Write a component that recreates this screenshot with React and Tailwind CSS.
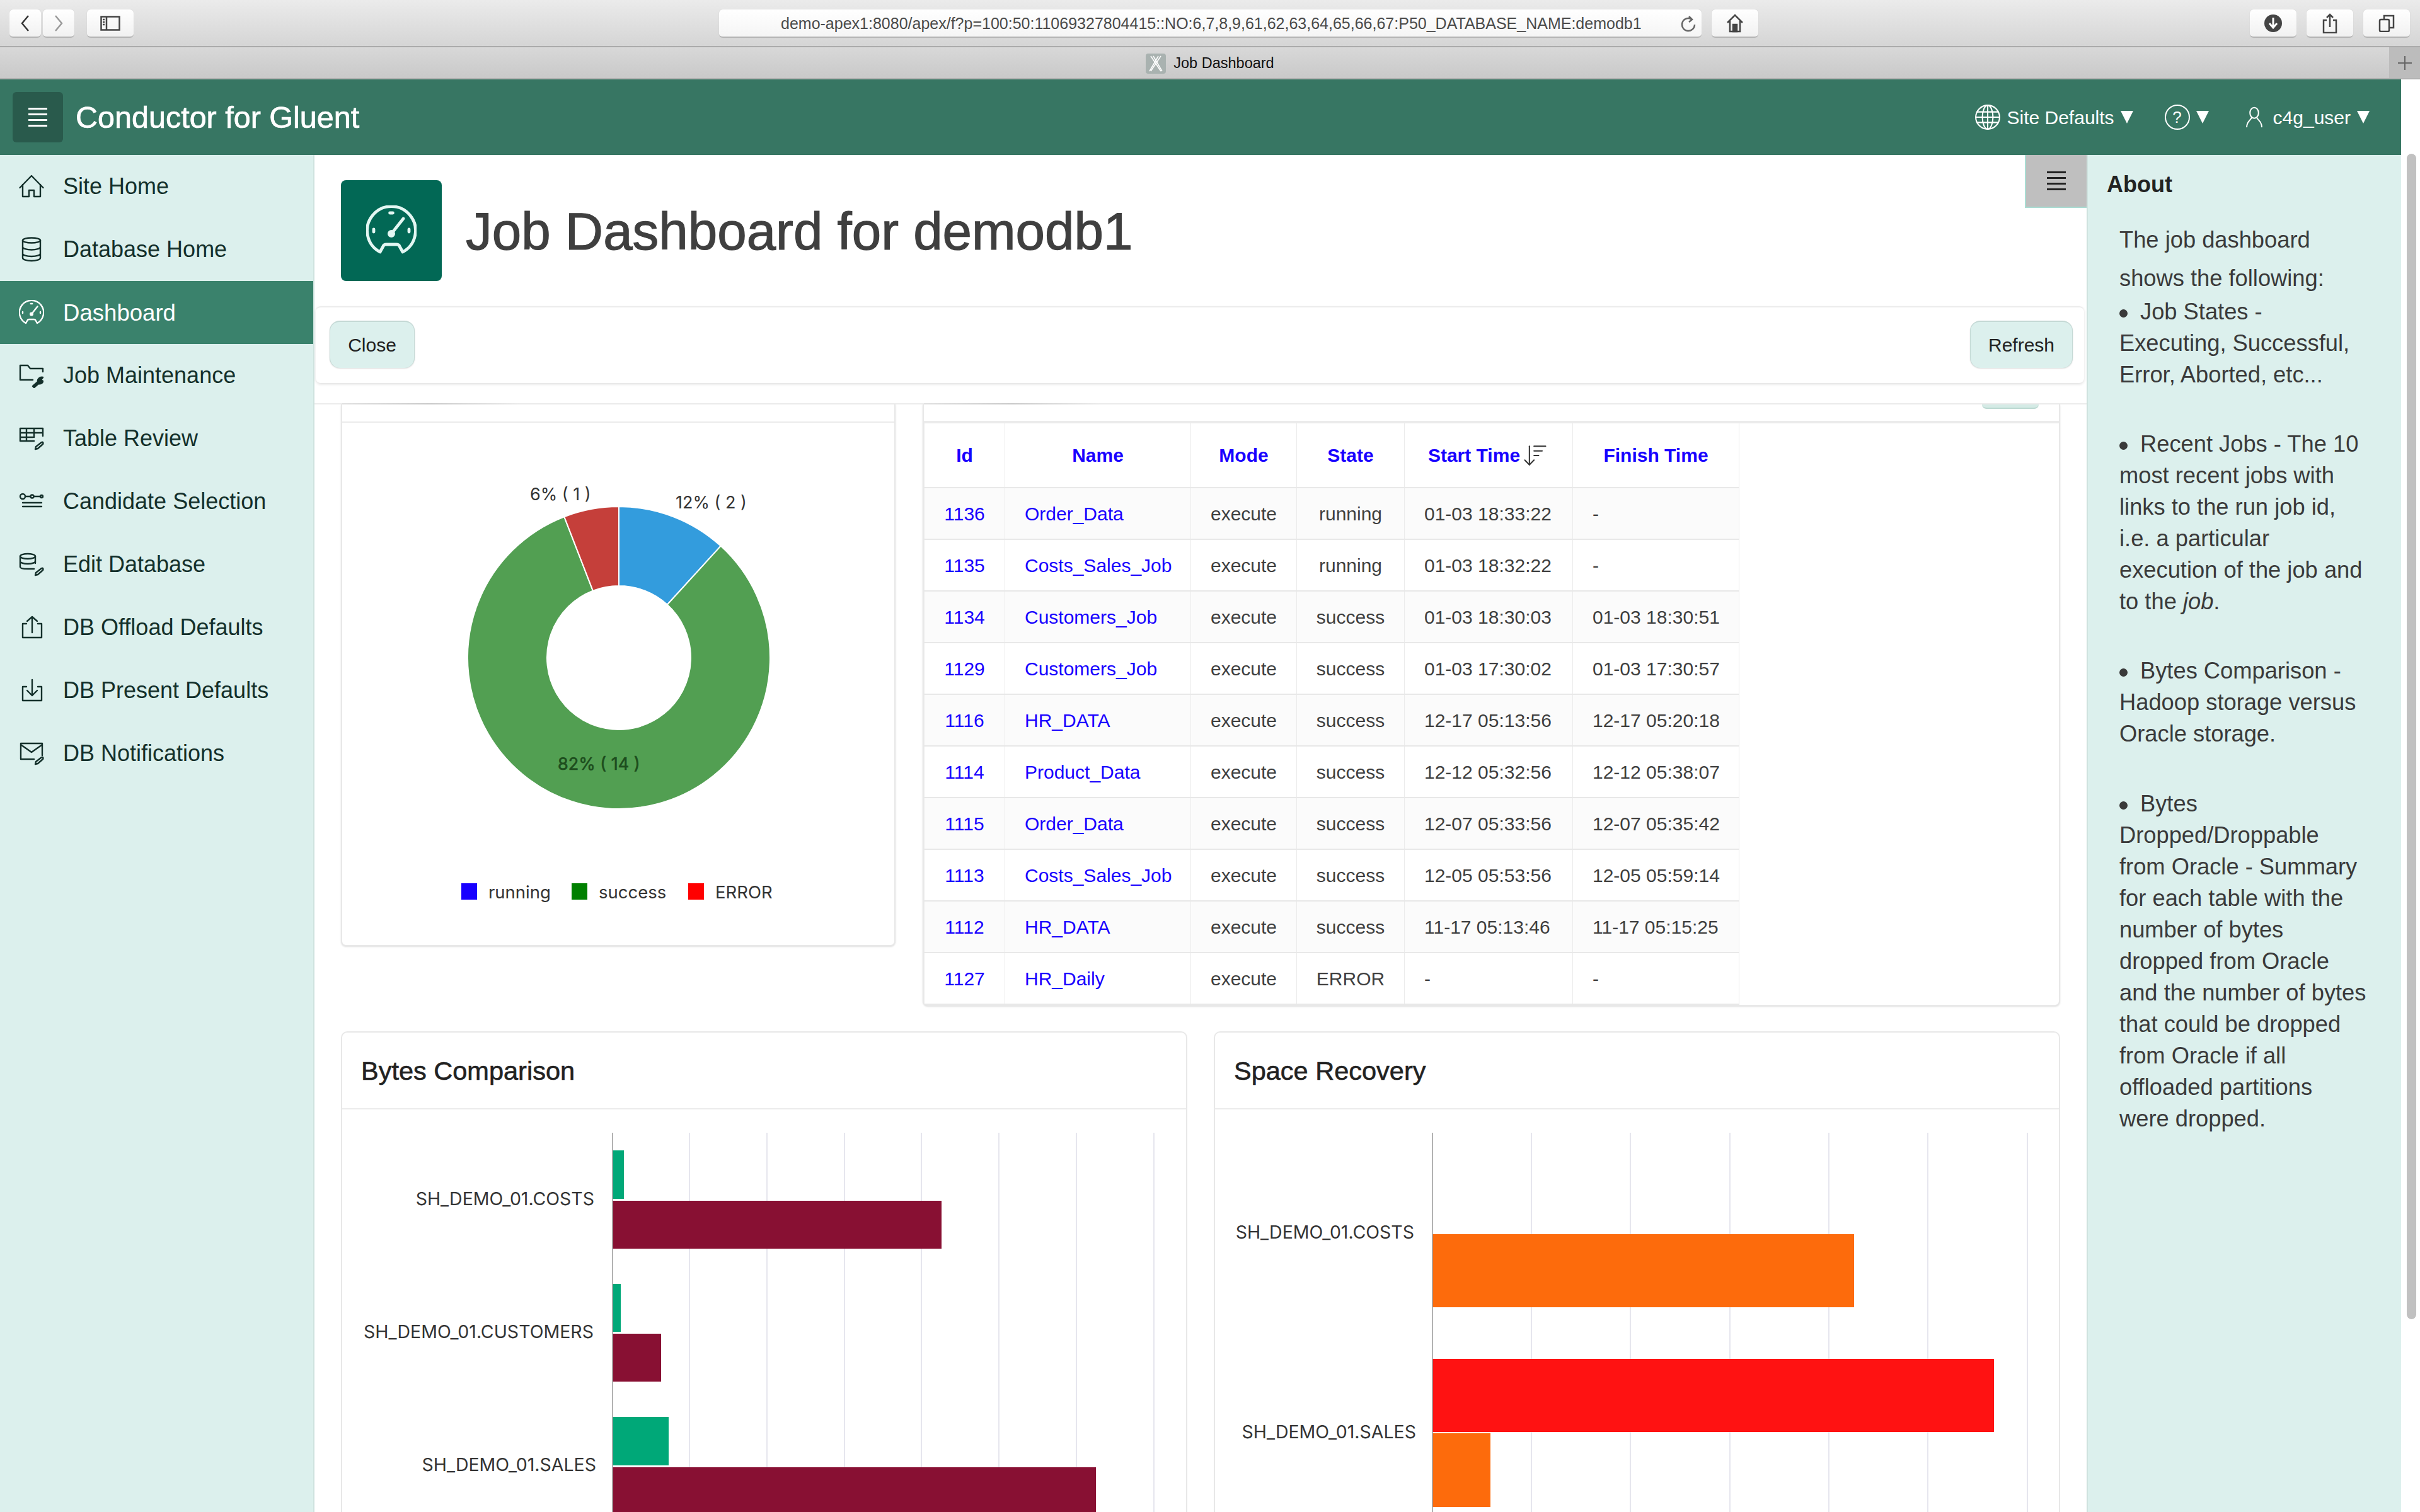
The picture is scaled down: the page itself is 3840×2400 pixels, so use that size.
import { ArrowDownWideNarrow } from "lucide-react";

const helvetica = "font-['Liberation_Sans',Arial,sans-serif]";

const jobs = [
  ["1136", "Order_Data", "running", "01-03 18:33:22", "-"],
  ["1135", "Costs_Sales_Job", "running", "01-03 18:32:22", "-"],
  ["1134", "Customers_Job", "success", "01-03 18:30:03", "01-03 18:30:51"],
  ["1129", "Customers_Job", "success", "01-03 17:30:02", "01-03 17:30:57"],
  ["1116", "HR_DATA", "success", "12-17 05:13:56", "12-17 05:20:18"],
  ["1114", "Product_Data", "success", "12-12 05:32:56", "12-12 05:38:07"],
  ["1115", "Order_Data", "success", "12-07 05:33:56", "12-07 05:35:42"],
  ["1113", "Costs_Sales_Job", "success", "12-05 05:53:56", "12-05 05:59:14"],
  ["1112", "HR_DATA", "success", "11-17 05:13:46", "11-17 05:15:25"],
  ["1127", "HR_Daily", "ERROR", "-", "-"],
];

const Svg = ({ children, size = 40, className = "", sw = 2.4 }) => (
  <svg
    width={size}
    height={size}
    viewBox="0 0 40 40"
    fill="none"
    stroke="currentColor"
    strokeWidth={sw}
    strokeLinecap="round"
    strokeLinejoin="round"
    className={className}
  >
    {children}
  </svg>
);

const Pencil = () => <path d="M26 37l1-4 9-7c2-1 3 1 2 3l-8 7z" />;

const HomeIcon = (p) => (
  <Svg {...p}>
    <path d="M1.5 22L20 3l18.5 19M6 17v19h10V26h8v10h10V17" />
  </Svg>
);
const DatabaseIcon = (p) => (
  <Svg {...p}>
    <ellipse cx="20" cy="5.5" rx="14" ry="4" />
    <path d="M6 5.5v28c0 2.5 6 4.5 14 4.5s14-2 14-4.5v-28M6 16c0 2.5 6 4.5 14 4.5s14-2 14-4.5M6 26.5c0 2.5 6 4.5 14 4.5s14-2 14-4.5" />
  </Svg>
);
const GaugeIcon = (p) => (
  <Svg {...p}>
    <path d="M11 37A19.2 19.2 0 1 1 29 37l-2.5-4.5Q26 31 24 31H16Q14 31 13.5 32.5Z" />
    <path d="M20 22.5l9.5-12" />
    <circle cx="20" cy="22.5" r="1.8" fill="currentColor" />
    <path d="M18.8 6h2.4M6 19v2M34 19v2" />
  </Svg>
);
const FolderWrenchIcon = (p) => (
  <Svg {...p}>
    <path d="M22 27H2V4h12l4 5h20v5" />
    <path d="M22 37l8-7c-1-4 3-8 8-7l-3 4 3 2c0 3-4 5-7 4l-7 6z" fill="currentColor" />
  </Svg>
);
const TableEditIcon = (p) => (
  <Svg {...p}>
    <path d="M24 24H2V4h36v12M2 11h36M2 18h20M12 4v20M24 4v14" />
    <Pencil />
  </Svg>
);
const SlidersIcon = (p) => (
  <Svg {...p}>
    <circle cx="6" cy="12" r="4" />
    <circle cx="21" cy="12" r="2.5" />
    <circle cx="36" cy="12" r="2" />
    <path d="M10 12h8M24 12h10M6 22h30M6 28h30" />
  </Svg>
);
const DatabaseEditIcon = (p) => (
  <Svg {...p}>
    <ellipse cx="14" cy="7" rx="12" ry="4" />
    <path d="M2 7v17c0 2 5 3 12 3h10M26 7v11M2 15c0 2 5 4 12 4s12-2 12-4" />
    <Pencil />
  </Svg>
);
const UploadIcon = (p) => (
  <Svg {...p}>
    <path d="M12 14H6v22h30V14h-6M21 28V3M13 10l8-7 8 7" />
  </Svg>
);
const DownloadIcon = (p) => (
  <Svg {...p}>
    <path d="M12 14H6v22h30V14h-6M21 28V3M13 20l8 8 8-8" />
  </Svg>
);
const MailEditIcon = (p) => (
  <Svg {...p}>
    <path d="M24 29H3V4h34v19M3 6l17 12 17-12" />
    <Pencil />
  </Svg>
);
const GlobeIcon = (p) => (
  <Svg {...p}>
    <circle cx="20" cy="20" r="18" />
    <ellipse cx="20" cy="20" rx="8" ry="18" />
    <path d="M20 2v36M4 12h32M4 28h32M2 20h36" />
  </Svg>
);
const UserIcon = (p) => (
  <Svg {...p}>
    <ellipse cx="20" cy="12" rx="8" ry="10" />
    <path d="M15 21c-1 4-9 7-9 17M25 21c1 4 9 7 9 17" />
  </Svg>
);
const MenuIcon = ({ className = "" }) => (
  <span className={`flex w-[30px] flex-col gap-[6px] ${className}`}>
    <span className="h-[3px] bg-current" />
    <span className="h-[3px] bg-current" />
    <span className="h-[3px] bg-current" />
    <span className="h-[3px] bg-current" />
  </span>
);

const navItems = [
  { label: "Site Home", icon: HomeIcon },
  { label: "Database Home", icon: DatabaseIcon },
  { label: "Dashboard", icon: GaugeIcon, active: true },
  { label: "Job Maintenance", icon: FolderWrenchIcon },
  { label: "Table Review", icon: TableEditIcon },
  { label: "Candidate Selection", icon: SlidersIcon },
  { label: "Edit Database", icon: DatabaseEditIcon },
  { label: "DB Offload Defaults", icon: UploadIcon },
  { label: "DB Present Defaults", icon: DownloadIcon },
  { label: "DB Notifications", icon: MailEditIcon },
];

const ChromeButton = ({ className = "", children }) => (
  <div className={`flex h-[45px] items-center justify-center rounded-[6px] border-b-2 border-[#b4b4b4] bg-gradient-to-b from-white to-[#f1f1f1] text-[#444] shadow-[0_0_1px_#b5b5b5] ${className}`}>
    {children}
  </div>
);

const BrowserChrome = () => (
  <div className={helvetica}>
    <div className="flex h-[75px] items-start border-b-2 border-[#ababab] bg-gradient-to-b from-[#ebebeb] to-[#d5d5d5] pt-[15px]">
      <div className="ml-[15px] flex gap-[3px]">
        <ChromeButton className="w-[50px]">
          <svg width="20" height="30" viewBox="0 0 20 30" fill="none" stroke="#333" strokeWidth="2.5"><path d="M15 3L5 15l10 12" /></svg>
        </ChromeButton>
        <ChromeButton className="w-[50px]">
          <svg width="20" height="30" viewBox="0 0 20 30" fill="none" stroke="#999" strokeWidth="2.5"><path d="M5 3l10 12L5 27" /></svg>
        </ChromeButton>
      </div>
      <ChromeButton className="ml-[20px] w-[74px]">
        <svg width="32" height="24" viewBox="0 0 32 24" fill="none" stroke="#444" strokeWidth="2.5"><rect x="1.5" y="1.5" width="29" height="21" /><path d="M10 1.5v21M4 6h3M4 10h3M4 14h3" /></svg>
      </ChromeButton>
      <div className="ml-[929px] flex h-[45px] w-[1559px] items-center rounded-[6px] border-b-2 border-[#b4b4b4] bg-gradient-to-b from-white to-[#f5f5f5] pt-[2px] pl-[98px] text-[25px] whitespace-nowrap text-[#4a4a4a] shadow-[0_0_1px_#b5b5b5]">
        demo-apex1:8080/apex/f?p=100:50:11069327804415::NO:6,7,8,9,61,62,63,64,65,66,67:P50_DATABASE_NAME:demodb1
        <svg className="ml-[60px] shrink-0" width="26" height="28" viewBox="0 0 26 28" fill="none" stroke="#666" strokeWidth="2.5"><path d="M20 7a10 10 0 1 0 4 8M15 2l5 5-5 4" /></svg>
      </div>
      <ChromeButton className="ml-[16px] w-[74px]">
        <svg width="30" height="30" viewBox="0 0 30 30" fill="none" stroke="#444" strokeWidth="2.5"><path d="M3 14L15 2l12 12M7 11v17h16V11" /><rect x="12" y="17" width="6" height="11" fill="#444" /></svg>
      </ChromeButton>
      <ChromeButton className="ml-[780px] w-[74px]">
        <svg width="30" height="30" viewBox="0 0 30 30"><circle cx="15" cy="15" r="14" fill="#444" /><path d="M15 6v14M9 15l6 7 6-7" fill="none" stroke="#fff" strokeWidth="3" /></svg>
      </ChromeButton>
      <ChromeButton className="ml-[16px] w-[74px]">
        <svg width="24" height="32" viewBox="0 0 24 32" fill="none" stroke="#444" strokeWidth="2.5"><path d="M7 11H2v20h20V11h-5M12 22V2M7 7l5-5 5 5" /></svg>
      </ChromeButton>
      <ChromeButton className="ml-[16px] w-[74px]">
        <svg width="26" height="28" viewBox="0 0 26 28" fill="none" stroke="#444" strokeWidth="2.5"><rect x="2" y="8" width="15" height="19" rx="2" /><path d="M9 8V2h15v19h-7" /></svg>
      </ChromeButton>
    </div>
    <div className="flex h-[51px] border-b-2 border-[#b2b2b2] bg-gradient-to-b from-[#d8d8d8] to-[#c9c9c9]">
      <div className="flex flex-1 items-center justify-center gap-[12px] pt-[2px] text-[23.5px] text-[#111]">
        <span className="flex h-[32px] w-[32px] items-center justify-center rounded-[4px] bg-[#a9b2b0]">
          <svg width="22" height="28" viewBox="0 0 22 28" fill="none" stroke="#fff" strokeWidth="1.5"><path d="M3 2l16 24M19 2L3 26M7 2l14 24M15 2L1 26" /></svg>
        </span>
        <span className="mr-[-49px]">Job Dashboard</span>
      </div>
      <div className="flex w-[49px] items-center justify-center bg-[#bcbcbc]">
        <svg width="26" height="26" viewBox="0 0 26 26" stroke="#666" strokeWidth="2"><path d="M13 2v22M2 13h22" /></svg>
      </div>
    </div>
  </div>
);

const Caret = () => <span className="ml-[10px] border-x-[10px] border-t-[20px] border-x-transparent border-t-white" />;

const Header = () => (
  <header className="flex h-[120px] items-center bg-[#377663] pr-[50px] pl-[20px] text-white">
    <div className="flex h-[80px] w-[80px] items-center justify-center rounded-[6px] bg-[#295a4c]">
      <MenuIcon />
    </div>
    <div className="ml-[20px] text-[48.5px] [-webkit-text-stroke:0.7px_white]">Conductor for Gluent</div>
    <div className="ml-auto flex items-center text-[30px]">
      <GlobeIcon size={42} sw={2} />
      <span className="ml-[9px]">Site Defaults</span>
      <Caret />
      <span className="ml-[50px] flex h-[40px] w-[40px] items-center justify-center rounded-full border-2 border-white text-[26px]">?</span>
      <Caret />
      <span className="ml-[55px]"><UserIcon size={34} /></span>
      <span className="ml-[13px]">c4g_user</span>
      <Caret />
    </div>
  </header>
);

const Sidebar = () => (
  <nav className="w-[499px] shrink-0 border-r-2 border-[#cfe3df] bg-[#dcf0ed] text-[36px] text-[#14302b]">
    {navItems.map((item) => {
      const Icon = item.icon;
      return (
        <div
          key={item.label}
          className={`flex h-[100px] items-center pl-[30px] ${item.active ? "bg-[#3a826c] text-white" : ""}`}
        >
          <Icon />
          <span className={`ml-[30px] ${item.active ? "pt-[3px] text-[36.6px]" : ""}`}>{item.label}</span>
        </div>
      );
    })}
  </nav>
);

const polar = (deg, r, cx = 982, cy = 1044) => {
  const a = (deg * Math.PI) / 180;
  return [cx + r * Math.sin(a), cy - r * Math.cos(a)];
};

const donutSlice = (from, to, R = 240, r = 114) => {
  const [x1, y1] = polar(from, R);
  const [x2, y2] = polar(to, R);
  const [x3, y3] = polar(to, r);
  const [x4, y4] = polar(from, r);
  const large = to - from > 180 ? 1 : 0;
  return `M${x1} ${y1}A${R} ${R} 0 ${large} 1 ${x2} ${y2}L${x3} ${y3}A${r} ${r} 0 ${large} 0 ${x4} ${y4}Z`;
};

// grey trace of the region heading that has scrolled under the button bar
const ScrollEdge = () => (
  <div className="-mt-[2px] h-[2px] w-[280px] bg-gradient-to-r from-[#e0e0e0] via-[#c8c8c8] to-transparent" />
);

const DonutCard = () => (
  <section className="w-[880px] shrink-0 rounded-b-[8px] border-x-2 border-b-2 border-[#e8e8e8] bg-white shadow-sm">
    <ScrollEdge />
    <div className="h-[29px] border-b-2 border-[#ebebeb]" />
    <svg width="876" height="829" viewBox="543 671 876 829" className="block font-['Inter',sans-serif]">
      <path d={donutSlice(0, 42.35)} fill="#339cdd" stroke="#fff" strokeWidth="2" />
      <path d={donutSlice(42.35, 338.82)} fill="#529f52" stroke="#fff" strokeWidth="2" />
      <path d={donutSlice(338.82, 360)} fill="#c53f3a" stroke="#fff" strokeWidth="2" />
      <g fontSize="27" fill="#333">
        <text x="841" y="794">6% ( 1 )</text>
        <text x="1072" y="807">12% ( 2 )</text>
        <text x="885" y="1222" fill="#1d4d1d" stroke="#1d4d1d" strokeWidth="0.6">82% ( 14 )</text>
      </g>
      <g fontSize="27.5" fill="#333">
        <rect x="732" y="1402" width="25" height="26" fill="#1800ff" />
        <text x="775" y="1426">running</text>
        <rect x="907" y="1402" width="25" height="26" fill="#008000" />
        <text x="950" y="1426">success</text>
        <rect x="1092" y="1402" width="25" height="26" fill="#ff0000" />
        <text x="1135" y="1426">ERROR</text>
      </g>
    </svg>
  </section>
);

const Th = ({ children }) => (
  <th className="border-x border-[#ebebeb] text-center font-bold text-[#1800ff]">{children}</th>
);

const JobsTable = () => (
  <section className="min-w-0 flex-1 rounded-b-[8px] border-x-2 border-b-2 border-[#e8e8e8] bg-white shadow-sm">
    <ScrollEdge />
    <div className="flex h-[30px] justify-end border-b-4 border-[#ebebeb] pr-[32px]">
      <div className="h-[7px] w-[90px] rounded-b-[16px] border-b-2 border-[#bcd8d1] bg-[#d5ebe6]" />
    </div>
    <table className={`w-[1293px] table-fixed border-collapse text-[30px] text-[#3f3f3f] ${helvetica}`}>
      <colgroup>
        <col className="w-[128px]" />
        <col className="w-[295px]" />
        <col className="w-[168px]" />
        <col className="w-[171px]" />
        <col className="w-[267px]" />
        <col className="w-[264px]" />
      </colgroup>
      <thead>
        <tr className="h-[102px] border-b-2 border-[#e8e8e8]">
          <Th>Id</Th>
          <Th>Name</Th>
          <Th>Mode</Th>
          <Th>State</Th>
          <Th>
            <span className="inline-flex items-center">
              Start Time
              <ArrowDownWideNarrow size={44} strokeWidth={1.1} className="ml-[2px] text-[#333]" />
            </span>
          </Th>
          <Th>Finish Time</Th>
        </tr>
      </thead>
      <tbody>
        {jobs.map((job, i) => (
          <tr key={job[0]} className={`h-[82px] border-b-2 border-[#e8e8e8] ${i % 2 === 0 ? "bg-[#fbfbfb]" : "bg-white"}`}>
            <td className="border-x border-[#ebebeb] text-center text-[#1800ff]">{job[0]}</td>
            <td className="border-x border-[#ebebeb] pl-[31px] text-[#1800ff]">{job[1]}</td>
            <td className="border-x border-[#ebebeb] text-center">execute</td>
            <td className="border-x border-[#ebebeb] text-center">{job[2]}</td>
            <td className="border-x border-[#ebebeb] pl-[31px]">{job[3]}</td>
            <td className="border-x border-[#ebebeb] pl-[31px]">{job[4]}</td>
          </tr>
        ))}
      </tbody>
    </table>
  </section>
);

const BarChart = ({ axis, grid, bars, labels, vx, vw }) => (
  <svg width={vw} height="640" viewBox={`${vx} 1760 ${vw} 640`} className="block font-['Inter',sans-serif]">
    {grid.map((x) => (
      <line key={x} x1={x} x2={x} y1="1797" y2="2400" stroke="#e6e6ee" strokeWidth="2" />
    ))}
    {bars.map((b) => (
      <rect key={b.y} x={axis} y={b.y} width={b.w} height={b.h} fill={b.c} />
    ))}
    <line x1={axis} x2={axis} y1="1797" y2="2400" stroke="#999" strokeWidth="1.5" />
    {labels.map((l) => (
      <text key={l.t} x={l.x} y={l.y} textAnchor="end" fontSize="28.5" fill="#333">{l.t}</text>
    ))}
  </svg>
);

const ChartCard = ({ title, children }) => (
  <section className="h-[900px] min-w-0 rounded-t-[10px] border-x-2 border-t-2 border-[#e8e8e8] bg-white">
    <h2 className={`flex h-[122px] items-center border-b-2 border-[#ebebeb] pt-[2px] pl-[30px] text-[41.5px] text-[#222] [-webkit-text-stroke:0.6px_#222] ${helvetica}`}>{title}</h2>
    {children}
  </section>
);

const maroon = "#881033";
const teal = "#00a878";

const Main = () => (
  <main className="relative flex min-w-0 flex-1 flex-col bg-white">
    <div className="absolute top-0 right-0 z-10 flex h-[84px] w-[98px] items-center justify-center border-b-2 border-l-2 border-[#a9dcd2] bg-[#bfbfbf] text-[#222]">
      <MenuIcon />
    </div>
    <div className="flex h-[240px] shrink-0 items-center pl-[42px]">
      <div className="flex h-[160px] w-[160px] items-center justify-center rounded-[8px] bg-[#026855] text-[#e3f7f3]">
        <GaugeIcon size={80} sw={2.4} />
      </div>
      <h1 className={`ml-[38px] pt-[3px] text-[83.5px] text-[#3f3f3f] [-webkit-text-stroke:1.2px_#3f3f3f] ${helvetica}`}>Job Dashboard for demodb1</h1>
    </div>
    <div className="relative z-10 mr-[4px] ml-[2px] flex h-[122px] shrink-0 items-start justify-between rounded-[8px] border-t-2 border-[#ececec] bg-white pt-[21px] pr-[18px] pl-[22px] text-[30px] text-[#222] shadow-[0_2px_4px_rgba(0,0,0,0.12)]">
      <button className="h-[75px] w-[135px] rounded-[16px] border-x border-t-2 border-[#c4d9d5] bg-[#dcf0ed] shadow-[0_1px_2px_rgba(0,0,0,0.15)]">Close</button>
      <button className="h-[75px] w-[163px] rounded-[16px] border-x border-t-2 border-[#c4d9d5] bg-[#dcf0ed] shadow-[0_1px_2px_rgba(0,0,0,0.15)]">Refresh</button>
    </div>
    <div className="min-h-0 flex-1 overflow-hidden">
      <div className="h-[34px] border-b-2 border-[#ececec]" />
      <div className="flex items-start gap-[43px] px-[42px]">
        <DonutCard />
        <JobsTable />
      </div>
      <div className="mt-[40px] grid grid-cols-2 gap-[42px] px-[42px]">
        <ChartCard title="Bytes Comparison">
          <BarChart
            vx={543}
            vw={1339}
            axis={972}
            grid={[1094, 1217, 1340, 1462, 1585, 1708, 1831]}
            bars={[
              { y: 1825, h: 77, w: 18, c: teal },
              { y: 1905, h: 76, w: 522, c: maroon },
              { y: 2037, h: 76, w: 13, c: teal },
              { y: 2116, h: 76, w: 77, c: maroon },
              { y: 2248, h: 77, w: 89, c: teal },
              { y: 2328, h: 80, w: 767, c: maroon },
            ]}
            labels={[
              { t: "SH_DEMO_01.COSTS", x: 943, y: 1912 },
              { t: "SH_DEMO_01.CUSTOMERS", x: 942, y: 2123 },
              { t: "SH_DEMO_01.SALES", x: 946, y: 2334 },
            ]}
          />
        </ChartCard>
        <ChartCard title="Space Recovery">
          <BarChart
            vx={1928}
            vw={1338}
            axis={2273}
            grid={[2430, 2587, 2745, 2902, 3059, 3217]}
            bars={[
              { y: 1958, h: 116, w: 669, c: "#fd6b0c" },
              { y: 2156, h: 116, w: 891, c: "#ff1212" },
              { y: 2274, h: 117, w: 92, c: "#fd6b0c" },
            ]}
            labels={[
              { t: "SH_DEMO_01.COSTS", x: 2244, y: 1965 },
              { t: "SH_DEMO_01.SALES", x: 2247, y: 2282 },
            ]}
          />
        </ChartCard>
      </div>
    </div>
  </main>
);

const Bullet = () => <span className="inline-block w-[33px] align-middle"><span className="block h-[13px] w-[13px] rounded-full bg-[#3a3a3a]" /></span>;

const AboutPanel = () => (
  <aside className="w-[499px] shrink-0 border-l-2 border-[#cfe3df] bg-[#dcf0ed] pl-[30px] text-[36.3px] text-[#3a3a3a]">
    <h3 className="flex h-[94px] items-center text-[36px] font-bold text-[#222]">About</h3>
    <div className="mt-[10px] pl-[20px] leading-[50px] whitespace-nowrap">
      <p className="leading-[61px]">The job dashboard<br />shows the following:</p>
      <p className="mt-[-2px]"><Bullet />Job States -<br />Executing, Successful,<br />Error, Aborted, etc...</p>
      <p className="mt-[60px]"><Bullet />Recent Jobs - The 10<br />most recent jobs with<br />links to the run job id,<br />i.e. a particular<br />execution of the job and<br />to the <em>job</em>.</p>
      <p className="mt-[60px]"><Bullet />Bytes Comparison -<br />Hadoop storage versus<br />Oracle storage.</p>
      <p className="mt-[61px]"><Bullet />Bytes<br />Dropped/Droppable<br />from Oracle - Summary<br />for each table with the<br />number of bytes<br />dropped from Oracle<br />and the number of bytes<br />that could be dropped<br />from Oracle if all<br />offloaded partitions<br />were dropped.</p>
    </div>
  </aside>
);

export default function App() {
  return (
    <div className={`h-[2400px] w-[3840px] overflow-hidden bg-white ${helvetica}`}>
      <BrowserChrome />
      <div className="flex h-[2274px]">
        <div className="flex w-[3810px] shrink-0 flex-col">
          <Header />
          <div className="flex min-h-0 flex-1">
            <Sidebar />
            <Main />
            <AboutPanel />
          </div>
        </div>
        <div className="flex-1 pt-[118px] pl-[9px]">
          <div className="h-[1850px] w-[15px] rounded-full bg-[#c1c1c1]" />
        </div>
      </div>
    </div>
  );
}
